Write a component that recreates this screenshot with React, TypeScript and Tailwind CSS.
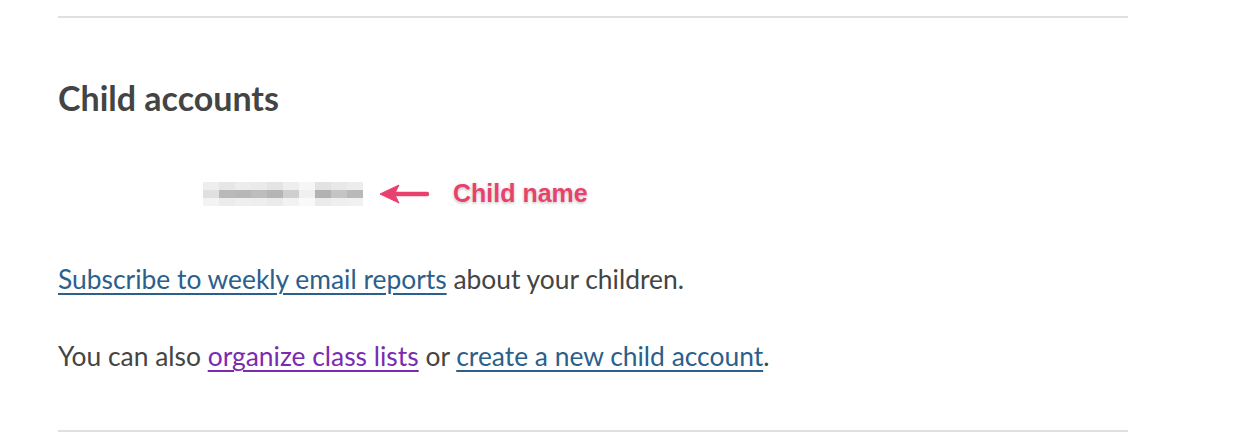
import React from "react";

function BlurredName() {
  // pixelated stand-in for the redacted child name
  const top = ["#eeeeee", "#e6e6e6", "#ececec", "#eaeaea", "#e4e4e4", "#eeeeee", "#f6f6f6", "#e2e2e2", "#e8e8e8", "#ececec"];
  const mid = ["#e0e0e0", "#b9b9b9", "#b7b7b7", "#bdbdbd", "#b5b5b5", "#cfcfcf", "#f0f0f0", "#b2b2b2", "#c4c4c4", "#b9b9b9"];
  const bot = ["#f3f3f3", "#ececec", "#efefef", "#eeeeee", "#ebebeb", "#f2f2f2", "#f9f9f9", "#ebebeb", "#efefef", "#f1f1f1"];
  return (
    <div className="flex flex-col w-[160px] h-[24px]">
      {[top, mid, bot].map((row, r) => (
        <div key={r} className="flex flex-1">
          {row.map((c, i) => (
            <div key={i} className="flex-1" style={{ backgroundColor: c }} />
          ))}
        </div>
      ))}
    </div>
  );
}

export default function App() {
  return (
    <div className="w-[1240px] h-[448px] bg-white font-['Lato','Noto_Sans',sans-serif] text-[#444]">
      <div className="w-[1070px] ml-[58px] pt-[16px]">
        <div className="h-[2px] bg-[#e0e0e0]" />

        <h2 className="mt-[60px] text-[34px] font-bold leading-[40px] text-[#444]">Child accounts</h2>

        <div className="mt-[61px] ml-[145px] flex items-center h-[30px]">
          <BlurredName />
          <svg width="50" height="22" viewBox="0 0 50 22" className="ml-[16px]">
            <path d="M48 11 L16 11" stroke="#e9416d" strokeWidth="4.5" strokeLinecap="round" />
            <path d="M1 11 L20 2 L15.5 11 L20 20 Z" fill="#e9416d" stroke="#e9416d" strokeWidth="1" strokeLinejoin="round" />
          </svg>
          <span
            className="ml-[24px] text-[25px] font-bold text-[#e8416c] font-['Liberation_Sans',Arial,sans-serif] [text-shadow:0_0_2px_#fff,0_1px_3px_rgba(0,0,0,0.35)]"
          >
            Child name
          </span>
        </div>

        <p className="mt-[54px] text-[26.4px] leading-[32px]">
          <a href="#" className="text-[#2b5f8c] underline underline-offset-[4px] decoration-[2px]">Subscribe to weekly email reports</a> about your children.
        </p>

        <p className="mt-[45px] text-[26.4px] leading-[32px]">
          You can also{" "}
          <a href="#" className="text-[#7b2bb1] underline underline-offset-[4px] decoration-[2px]">organize class lists</a> or{" "}
          <a href="#" className="text-[#2b5f8c] underline underline-offset-[4px] decoration-[2px]">create a new child account</a>.
        </p>

        <div className="mt-[58px] h-[2px] bg-[#e0e0e0]" />
      </div>
    </div>
  );
}
